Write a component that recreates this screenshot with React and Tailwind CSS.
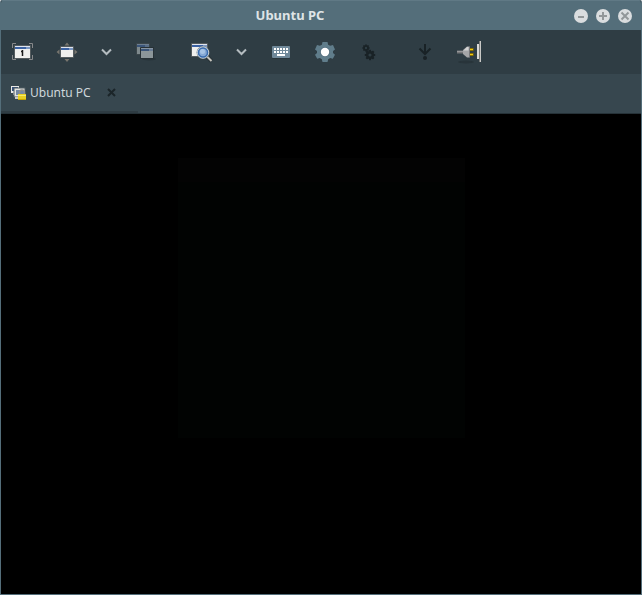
import React from "react";

function ToolButton({ label, arrow = false, children }) {
  return (
    <button
      type="button"
      aria-label={label}
      title={label}
      className={`flex h-11 shrink-0 items-center justify-center ${arrow ? "w-9" : "w-11"}`}
    >
      <svg width="24" height="24" viewBox="0 0 24 24" fill="none" aria-hidden="true">
        {children}
      </svg>
    </button>
  );
}

function Pane({ x, y, w, h, body = "#f0f0ee", bar = "#3b62a3", light = "#a9bcd9", edge = "#555c5f", hi = "#dfe5ef" }) {
  return (
    <g>
      <rect x={x} y={y} width={w} height={h} rx="1" fill={edge} />
      <rect x={x + 1} y={y + 1} width={w - 2} height={h - 2} fill={body} />
      <rect x={x + 1} y={y + 1} width={w - 2} height="1" fill={hi} />
      <rect x={x + 1} y={y + 2} width={w - 2} height="2" fill={bar} />
      <rect x={x + w - 5} y={y + 2} width="4" height="2" fill={light} opacity="0.6" />
    </g>
  );
}

const Chevron = () => (
  <path d="M7 9.5l4.500 4.500L16 9.500" stroke="#b4bcc0" strokeWidth="2" />
);

const TEETH = [0, 45, 90, 135, 180, 225, 270, 315];

function Cog({ cx, cy, r, hole, color }) {
  return (
    <g>
      {TEETH.map((a) => (
        <rect
          key={a}
          x={cx - r * 0.2}
          y={cy - r}
          width={r * 0.4}
          height={r}
          fill={color}
          transform={`rotate(${a} ${cx} ${cy})`}
        />
      ))}
      <circle cx={cx} cy={cy} r={(r * 0.78 + hole) / 2} stroke={color} strokeWidth={r * 0.78 - hole} />
      <circle cx={cx} cy={cy} r={hole} fill="#2f3d44" />
    </g>
  );
}

function WindowButton({ label, path }) {
  return (
    <button type="button" aria-label={label} className="flex w-[22px] items-center justify-center">
      <svg width="14" height="14" viewBox="0 0 14 14" fill="none" aria-hidden="true">
        <circle cx="7" cy="7" r="7" fill="#dadddf" />
        <path d={path} stroke="#929799" strokeWidth="2" />
      </svg>
    </button>
  );
}

function TitleBar() {
  return (
    <header className="flex h-[30px] items-center border-t border-[#607985] bg-[#546e7a] pr-[5px] pl-[9px]">
      <h1 className="flex-1 pb-0.5 text-center text-[13px] leading-5 font-bold text-[#dfe4e6]">Ubuntu PC</h1>
      <div className="flex pt-px">
        <WindowButton label="Minimize" path="M4 8h6" />
        <WindowButton label="Maximize" path="M3 7h8M7 3v8" />
        <WindowButton label="Close" path="M3.5 3.5l7 7M10.5 3.5l-7 7" />
      </div>
    </header>
  );
}

function Toolbar() {
  return (
    <div role="toolbar" aria-label="Connection" className="flex h-11 items-center bg-[#2f3d44]">
      <ToolButton label="Resize window to fit">
        <path
          d="M1.5 8V3.5H5M18 3.5h3.5V8M21.5 15v4.5H18M5 19.5H1.5V15"
          stroke="#87888a"
        />
        <Pane x={3} y={5} w={17} h={14} />
        <path d="M10 11.5h1M11.500 10v6" stroke="#1c1c1c" strokeWidth="1.500" />
      </ToolButton>
      <ToolButton label="Toggle fullscreen">
        <path
          d="M9.500 5.500L12 2.500l2.500 3zM9.500 19l2.500 3 2.500-3zM4.500 9.500L1.500 12l3 2.500zM19.500 9.500l3 2.500-3 2.500z"
          fill="#77756e"
        />
        <Pane x={5} y={6} w={14} h={12} />
      </ToolButton>
      <ToolButton label="Fullscreen options" arrow>
        <Chevron />
      </ToolButton>
      <ToolButton label="Switch tab pages">
        <ellipse cx="14" cy="19" rx="7" ry="1.5" fill="#28343a" />
        <Pane x={1} y={3} w={14} h={12} body="#7e898d" bar="#3a557a" edge="#3b464b" hi="#6d7f92" light="#6d7f92" />
        <Pane x={5} y={7} w={14} h={12} body="#8c969a" bar="#3a557a" edge="#273136" hi="#8795a3" light="#8795a3" />
      </ToolButton>
      <span className="w-2.5 shrink-0" />
      <ToolButton label="Scaled mode">
        <Pane x={2} y={3} w={17} h={14} />
        <path d="M18.500 17l4 4" stroke="#273136" strokeWidth="4" />
        <path d="M18 16.500l4.500 4.500" stroke="#c5c4bd" strokeWidth="2" />
        <circle cx="14" cy="12.500" r="6.500" fill="#7e8c94" />
        <circle cx="14" cy="12.500" r="5.500" fill="#86a9d6" stroke="#d4dade" />
        <circle cx="14" cy="12.500" r="4.500" stroke="#3a6db0" strokeWidth="1.500" />
        <circle cx="13.500" cy="11.500" r="2.500" fill="#a6c4e6" />
      </ToolButton>
      <ToolButton label="Scale options" arrow>
        <g transform="translate(1 0)">
          <Chevron />
        </g>
      </ToolButton>
      <ToolButton label="Grab keyboard">
        <rect x="3" y="7" width="18" height="12" rx="1" fill="#28343a" />
        <rect x="3" y="6" width="18" height="12" rx="1" fill="#70899a" />
        <path d="M5 9h14M5 12h14" stroke="#fff" strokeWidth="2" strokeDasharray="2 1" />
        <path d="M8 15h8" stroke="#fff" strokeWidth="2" />
      </ToolButton>
      <ToolButton label="Preferences">
        <path
          d="M9.500 2h5l.6 2.700 2 1.100L20 5l2 4.400-2 1.600v2l2 1.700-2.200 4.100-2.600-.7-2 1.200-.7 2.700h-5l-.7-2.700-2-1.200-2.600.7L2 14.700 4 13v-2L2 9.400 4 5l2.900.8 2-1.100z"
          fill="#607d8b"
        />
        <circle cx="12" cy="12" r="5" fill="#547080" />
        <circle cx="12" cy="12" r="4.200" fill="#fff" />
      </ToolButton>
      <ToolButton label="Tools">
        <Cog cx={9} cy={8} r={3.6} hole={1.2} color="#192226" />
        <Cog cx={13} cy={15} r={5.2} hole={1.6} color="#192226" />
      </ToolButton>
      <span className="w-3 shrink-0" />
      <ToolButton label="Minimize window">
        <path d="M12 4v10M6.500 8.500l5.500 5.500L17.500 8.500" stroke="#192226" strokeWidth="2" />
        <circle cx="12" cy="18" r="2" fill="#192226" />
      </ToolButton>
      <ToolButton label="Disconnect">
        <ellipse cx="9" cy="22" rx="8" ry="1.500" fill="#28343a" />
        <path d="M0 12h7" stroke="#77787a" strokeWidth="3" />
        <path d="M0 11.500h7" stroke="#96979a" />
        <path d="M12.500 6.500H10L6 10v4l4 3.500h2.500z" fill="#a5a6a8" />
        <path d="M11.500 7H10l-3.500 3.500h5z" fill="#d4d4d4" />
        <path d="M12.500 6.500v11" stroke="#76777a" />
        <path d="M13 9.500h3.500M13 14.500h3.500" stroke="#8b7100" strokeWidth="3" />
        <path d="M13 9.500h3M13 14.500h3" stroke="#f0ca16" />
        <rect x="20" y="4" width="2" height="15" fill="#d9d9d6" />
        <rect x="22" y="1" width="1" height="21" fill="#7b7c7a" />
        <rect x="23" y="1" width="1" height="21" fill="#c9c9c6" />
      </ToolButton>
    </div>
  );
}

function TabBar() {
  return (
    <div role="tablist" className="flex h-10 border-b border-[#263238] bg-[#37474f]">
      <div className="flex w-[137px] items-center border-b-2 border-[#2f3c43] pl-[10px]">
        <button type="button" role="tab" aria-selected="true" className="flex items-center gap-1">
          <svg width="15" height="15" viewBox="0 0 15 15" fill="none" aria-hidden="true">
            <rect x="0" y="1" width="8" height="7" fill="#e8e8e6" />
            <rect x="1" y="2" width="6" height="4" fill="#35507c" />
            <rect x="2" y="8" width="2" height="2" fill="#bdbdb9" />
            <rect x="3" y="3" width="11" height="9" fill="#e4e4e1" stroke="#4d5a60" />
            <rect x="5" y="5" width="8" height="5" fill="#7388a3" />
            <rect x="4" y="12" width="3" height="2" fill="#c9c9c5" />
            <path d="M8.500 10V7.500a2.500 2.500 0 0 1 5 0V10" stroke="#8f8f8c" strokeWidth="1.500" />
            <rect x="7" y="9" width="8" height="6" fill="#e8cf22" />
            <rect x="7" y="10" width="8" height="1" fill="#f8ed6a" />
            <rect x="7" y="14" width="8" height="1" fill="#c7a400" />
          </svg>
          <span className="text-[12px] leading-5 text-[#cfd8dc]">Ubuntu PC</span>
        </button>
        <button type="button" aria-label="Close tab" className="ml-4">
          <svg width="9" height="9" viewBox="0 0 9 9" fill="none" aria-hidden="true">
            <path d="M1 1l7 7M8 1L1 8" stroke="#1b2529" strokeWidth="2" />
          </svg>
        </button>
      </div>
    </div>
  );
}

export default function App() {
  return (
    <div className="min-h-screen bg-[#d5d8da] font-['Noto_Sans',sans-serif]">
      <div className="flex min-h-screen flex-col overflow-hidden rounded-t-[3px] border-x border-b border-[#546e7a] bg-black">
        <TitleBar />
        <Toolbar />
        <TabBar />
        <main aria-label="Remote desktop" className="flex flex-1 justify-center bg-black px-4 pt-11">
          <div className="h-[280px] w-[287px] bg-[#010302]">
            <div className="h-6 bg-[#030303]" />
          </div>
        </main>
      </div>
    </div>
  );
}
